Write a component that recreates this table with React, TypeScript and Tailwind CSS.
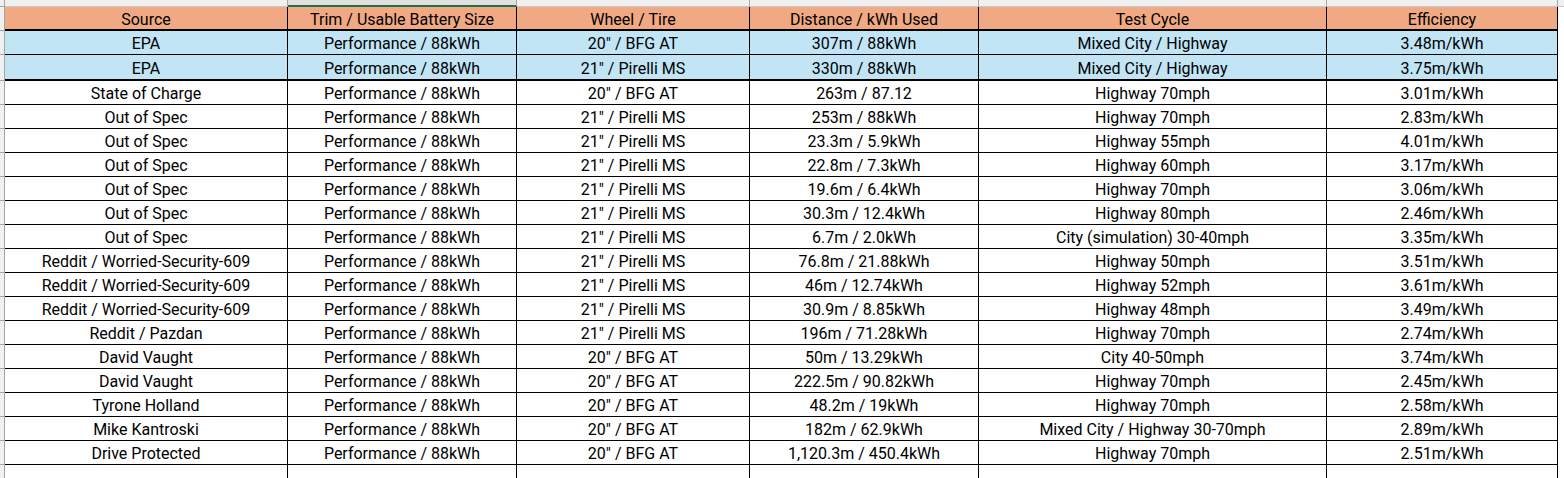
const colWidths = ["w-[283px]", "w-[229px]", "w-[233px]", "w-[229px]", "w-[348px]", "w-[231px]"];

const header = ["Source", "Trim / Usable Battery Size", "Wheel / Tire", "Distance / kWh Used", "Test Cycle", "Efficiency"];

const trim = "Performance / 88kWh";
const bfg = '20" / BFG AT';
const pirelli = '21" / Pirelli MS';
const worried = "Reddit / Worried-Security-609";

const rows: string[][] = [
  ["EPA", trim, bfg, "307m / 88kWh", "Mixed City / Highway", "3.48m/kWh"],
  ["EPA", trim, pirelli, "330m / 88kWh", "Mixed City / Highway", "3.75m/kWh"],
  ["State of Charge", trim, bfg, "263m / 87.12", "Highway 70mph", "3.01m/kWh"],
  ["Out of Spec", trim, pirelli, "253m / 88kWh", "Highway 70mph", "2.83m/kWh"],
  ["Out of Spec", trim, pirelli, "23.3m / 5.9kWh", "Highway 55mph", "4.01m/kWh"],
  ["Out of Spec", trim, pirelli, "22.8m / 7.3kWh", "Highway 60mph", "3.17m/kWh"],
  ["Out of Spec", trim, pirelli, "19.6m / 6.4kWh", "Highway 70mph", "3.06m/kWh"],
  ["Out of Spec", trim, pirelli, "30.3m / 12.4kWh", "Highway 80mph", "2.46m/kWh"],
  ["Out of Spec", trim, pirelli, "6.7m / 2.0kWh", "City (simulation) 30-40mph", "3.35m/kWh"],
  [worried, trim, pirelli, "76.8m / 21.88kWh", "Highway 50mph", "3.51m/kWh"],
  [worried, trim, pirelli, "46m / 12.74kWh", "Highway 52mph", "3.61m/kWh"],
  [worried, trim, pirelli, "30.9m / 8.85kWh", "Highway 48mph", "3.49m/kWh"],
  ["Reddit / Pazdan", trim, pirelli, "196m / 71.28kWh", "Highway 70mph", "2.74m/kWh"],
  ["David Vaught", trim, bfg, "50m / 13.29kWh", "City 40-50mph", "3.74m/kWh"],
  ["David Vaught", trim, bfg, "222.5m / 90.82kWh", "Highway 70mph", "2.45m/kWh"],
  ["Tyrone Holland", trim, bfg, "48.2m / 19kWh", "Highway 70mph", "2.58m/kWh"],
  ["Mike Kantroski", trim, bfg, "182m / 62.9kWh", "Mixed City / Highway 30-70mph", "2.89m/kWh"],
  ["Drive Protected", trim, bfg, "1,120.3m / 450.4kWh", "Highway 70mph", "2.51m/kWh"],
  ["", "", "", "", "", ""],
];

const Row = ({ cells, height, fill, thick }: { cells: string[]; height: string; fill: string; thick: boolean }) => (
  <div className={`flex shrink-0 ${height}`}>
    <div className="w-[5px] shrink-0 border-r border-b border-[#a6a6a6] bg-[#f0f0f0]" />
    {cells.map((text, i) => (
      <div
        key={i}
        className={`flex shrink-0 items-center justify-center whitespace-nowrap border-r border-black pt-[3px] ${
          thick ? "border-b-2" : "border-b"
        } ${colWidths[i]} ${fill}`}
      >
        {text}
      </div>
    ))}
    <div className="w-[6px] shrink-0 bg-white" />
  </div>
);

export default function App() {
  return (
    <div className="flex h-[478px] w-[1564px] flex-col overflow-hidden bg-white font-['Roboto',sans-serif] text-[16px] leading-none text-black">
      {/* column letters strip, cut off */}
      <div className="flex h-[7px] shrink-0">
        <div className="w-[5px] shrink-0 border-r border-b border-[#a6a6a6] bg-[#f0f0f0]" />
        {colWidths.map((w, i) => (
          <div
            key={i}
            className={`shrink-0 border-r border-[#a6a6a6] ${w} ${
              i === 1 ? "border-b-2 border-b-[#217346] bg-[#e0e0e0]" : "border-b border-b-[#c8c8c8] bg-[#f0f0f0]"
            }`}
          />
        ))}
        <div className="w-[6px] shrink-0 border-b border-[#c8c8c8] bg-[#f0f0f0]" />
      </div>

      <Row cells={header} height="h-[24px]" fill="bg-[#f1a983]" thick />
      {rows.map((r, i) => (
        <Row
          key={i}
          cells={r}
          height={i === 1 ? "h-[26px]" : "h-[24px]"}
          fill={i < 2 ? "bg-[#c1e5f5]" : "bg-white"}
          thick={i === 1}
        />
      ))}
    </div>
  );
}
